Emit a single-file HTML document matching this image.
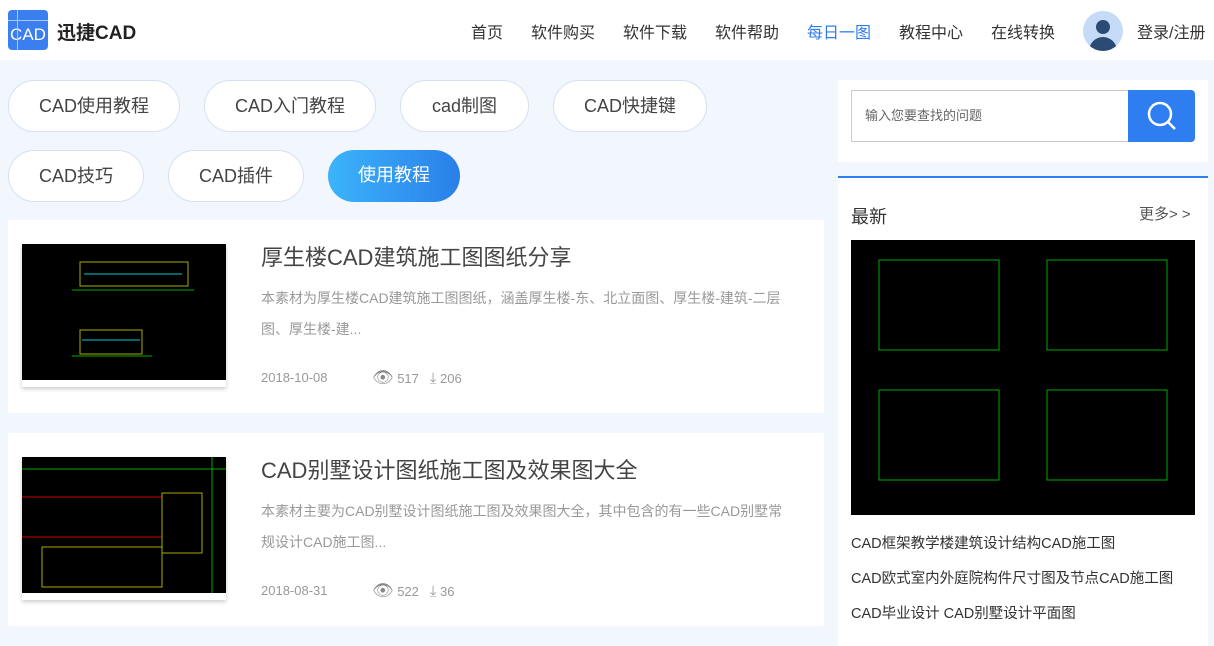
<!DOCTYPE html><html><head><meta charset="utf-8"><style>
*{margin:0;padding:0;box-sizing:border-box}
body{width:1214px;height:646px;overflow:hidden;background:#f2f6fd;font-family:"Liberation Sans","Noto Sans CJK SC",sans-serif;position:relative}
.hd{position:absolute;left:0;top:0;width:1214px;height:60px;background:#fff}
.logo{position:absolute;left:8px;top:10px;width:40px;height:40px;background:#3a7ef0;border-radius:4px;color:#fff;font-size:17px;line-height:50px;text-align:center}
.brand{position:absolute;left:57px;top:18px;font-size:19px;font-weight:bold;color:#222}
.nav{position:absolute;top:19px;font-size:16px;color:#333}
.av{position:absolute;left:1083px;top:11px;width:40px;height:40px;border-radius:50%;background:#c6dbf7;overflow:hidden}
.tag{position:absolute;height:52px;border:1px solid #d6e1f3;border-radius:26px;background:#fff;font-size:18px;color:#444;text-align:center;line-height:50px}
.card{position:absolute;left:8px;width:816px;background:#fff}
.th{position:absolute;left:14px;top:24px;width:204px;height:143px;background:#000;box-shadow:0 2px 4px rgba(0,0,0,.2);border-bottom:7px solid #fff;overflow:hidden}
.t{position:absolute;left:253px;font-size:22px;color:#444}
.d{position:absolute;left:253px;width:528px;font-size:14px;color:#999;line-height:31px}
.m{position:absolute;font-size:13px;color:#999}
.rl{position:absolute;left:851px;font-size:14.5px;color:#333}
</style></head><body>
<div class="hd">
<div class="logo">CAD<div style="position:absolute;left:9px;top:0;width:1px;height:40px;background:#aac8fa"></div><div style="position:absolute;left:0;top:10px;width:40px;height:1px;background:#aac8fa"></div></div>
<div class="brand">迅捷CAD</div>
<div class="nav" style="left:471px">首页</div>
<div class="nav" style="left:531px">软件购买</div>
<div class="nav" style="left:623px">软件下载</div>
<div class="nav" style="left:715px">软件帮助</div>
<div class="nav" style="left:807px;color:#2e7cf0">每日一图</div>
<div class="nav" style="left:899px">教程中心</div>
<div class="nav" style="left:991px">在线转换</div>
<div class="av"><div style="position:absolute;left:13px;top:9px;width:14px;height:14px;border-radius:50%;background:#2b4a74"></div><div style="position:absolute;left:6px;top:26px;width:28px;height:20px;border-radius:14px 14px 0 0;background:#2b4a74"></div></div>
<div class="nav" style="left:1137px">登录/注册</div>
</div>
<div class="tag" style="left:8px;top:80px;width:172px">CAD使用教程</div>
<div class="tag" style="left:204px;top:80px;width:172px">CAD入门教程</div>
<div class="tag" style="left:400px;top:80px;width:129px">cad制图</div>
<div class="tag" style="left:553px;top:80px;width:154px">CAD快捷键</div>
<div class="tag" style="left:8px;top:150px;width:136px">CAD技巧</div>
<div class="tag" style="left:168px;top:150px;width:136px">CAD插件</div>
<div class="tag" style="left:328px;top:150px;width:132px;border:0;background:linear-gradient(90deg,#3cb4fb,#2a7fe8);color:#fff">使用教程</div>

<div class="card" style="top:220px;height:193px">
<div class="th"><svg width="204" height="136"><g fill="none" stroke-width="1"><rect x="58" y="18" width="108" height="24" stroke="#aa0"/><line x1="62" y1="30" x2="160" y2="30" stroke="#0cc"/><line x1="50" y1="46" x2="172" y2="46" stroke="#0a0"/><rect x="58" y="86" width="62" height="24" stroke="#aa0"/><line x1="60" y1="96" x2="118" y2="96" stroke="#0cc"/><line x1="50" y1="112" x2="130" y2="112" stroke="#0a0"/></g></svg></div>
<div class="t" style="top:20px">厚生楼CAD建筑施工图图纸分享</div>
<div class="d" style="top:63px">本素材为厚生楼CAD建筑施工图图纸，涵盖厚生楼-东、北立面图、厚生楼-建筑-二层图、厚生楼-建...</div>
<div class="m" style="left:253px;top:150px">2018-10-08</div>
<div class="m" style="left:364px;top:148px"><span style="font-size:17px;color:#888">👁</span> 517 &nbsp;&nbsp;<span style="font-size:15px">⤓</span> 206</div>
</div>
<div class="card" style="top:433px;height:193px">
<div class="th"><svg width="204" height="136"><g fill="none" stroke-width="1"><line x1="0" y1="12" x2="204" y2="12" stroke="#0a0"/><line x1="0" y1="40" x2="140" y2="40" stroke="#c00"/><line x1="0" y1="80" x2="140" y2="80" stroke="#c00"/><rect x="20" y="90" width="120" height="40" stroke="#aa0"/><rect x="140" y="36" width="40" height="60" stroke="#aa0"/><line x1="190" y1="0" x2="190" y2="136" stroke="#0a0"/></g></svg></div>
<div class="t" style="top:20px">CAD别墅设计图纸施工图及效果图大全</div>
<div class="d" style="top:63px">本素材主要为CAD别墅设计图纸施工图及效果图大全，其中包含的有一些CAD别墅常规设计CAD施工图...</div>
<div class="m" style="left:253px;top:150px">2018-08-31</div>
<div class="m" style="left:364px;top:148px"><span style="font-size:17px;color:#888">👁</span> 522 &nbsp;&nbsp;<span style="font-size:15px">⤓</span> 36</div>
</div>

<div style="position:absolute;left:838px;top:80px;width:370px;height:82px;background:#fff"></div>
<div style="position:absolute;left:851px;top:90px;width:278px;height:52px;border:1px solid #ccc;border-right:0;font-size:13px;color:#666;line-height:50px;padding-left:13px;background:#fff">输入您要查找的问题</div>
<div style="position:absolute;left:1128px;top:90px;width:67px;height:52px;background:#2e7ef2;border-radius:0 4px 4px 0">
<svg width="67" height="52"><circle cx="32" cy="24" r="11" stroke="#fff" stroke-width="2.5" fill="none"/><line x1="40" y1="32" x2="47" y2="39" stroke="#fff" stroke-width="2.5"/></svg></div>
<div style="position:absolute;left:838px;top:176px;width:370px;height:470px;background:#fff;border-top:2px solid #2e7ef2"></div>
<div style="position:absolute;left:851px;top:203px;font-size:18px;color:#333">最新</div>
<div style="position:absolute;left:1139px;top:203px;font-size:15px;color:#555">更多&gt; &gt;</div>
<div style="position:absolute;left:851px;top:240px;width:344px;height:275px;background:#000"><svg width="344" height="275"><g fill="none" stroke="#0a0"><rect x="28" y="20" width="120" height="90"/><rect x="196" y="20" width="120" height="90"/><rect x="28" y="150" width="120" height="90"/><rect x="196" y="150" width="120" height="90"/></g></svg></div>
<div class="rl" style="top:532px">CAD框架教学楼建筑设计结构CAD施工图</div>
<div class="rl" style="top:567px">CAD欧式室内外庭院构件尺寸图及节点CAD施工图</div>
<div class="rl" style="top:602px">CAD毕业设计 CAD别墅设计平面图</div>
</body></html>
